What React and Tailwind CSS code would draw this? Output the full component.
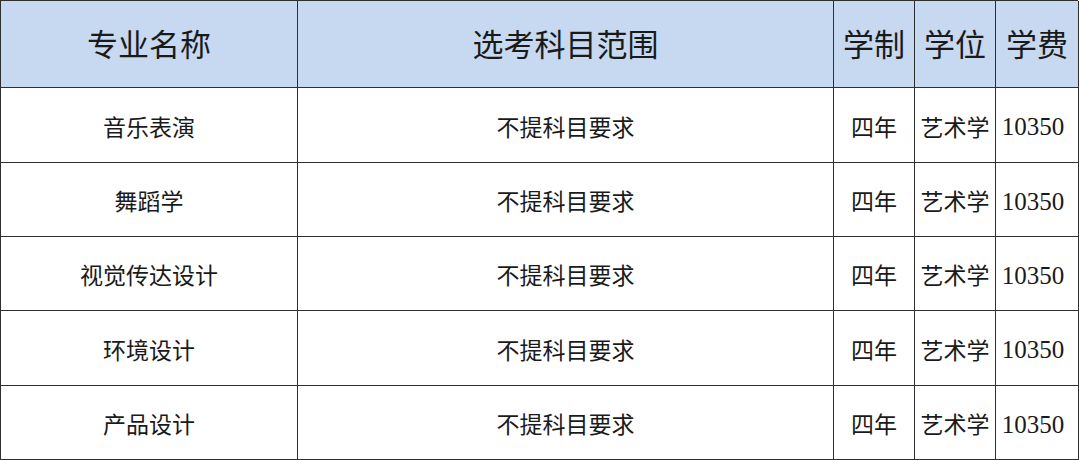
const rows = [
    { name: '音乐表演' },
    { name: '舞蹈学' },
    { name: '视觉传达设计' },
    { name: '环境设计' },
    { name: '产品设计' },
];

const font = { fontFamily: '"Liberation Serif", "Noto Sans CJK SC", serif' };

export default function App() {
    return (
        <div className="w-[1080px] h-[460px] bg-white overflow-hidden" style={font}>
            <div className="w-[1078px] grid grid-cols-[297px_536px_81px_81px_83px] grid-rows-[87px_75px_74px_74px_75px_74px] border-t-[1.5px] border-l-[1.5px] border-[#2f2f2f] text-[#1a1a1a]">
                {['专业名称', '选考科目范围', '学制', '学位', '学费'].map((h) => (
                    <div
                        key={h}
                        className="flex items-center justify-center pt-1 bg-[#c6d9f0] border-r-[1.5px] border-b-[1.5px] border-[#2f2f2f] text-[31px] whitespace-nowrap"
                    >
                        {h}
                    </div>
                ))}
                {rows.map((r) => (
                    <div key={r.name} className="contents">
                        <div className="flex items-center justify-center pt-2 border-r-[1.5px] border-b-[1.5px] border-[#2f2f2f] text-[23px]">
                            {r.name}
                        </div>
                        <div className="flex items-center justify-center pt-2 border-r-[1.5px] border-b-[1.5px] border-[#2f2f2f] text-[23px]">
                            不提科目要求
                        </div>
                        <div className="flex items-center justify-center pt-2 border-r-[1.5px] border-b-[1.5px] border-[#2f2f2f] text-[23px]">
                            四年
                        </div>
                        <div className="flex items-center justify-center pt-2 border-r-[1.5px] border-b-[1.5px] border-[#2f2f2f] text-[23px] whitespace-nowrap">
                            艺术学
                        </div>
                        <div className="flex items-center justify-center pt-1 pr-2 border-r-[1.5px] border-b-[1.5px] border-[#2f2f2f] text-[25px]">
                            10350
                        </div>
                    </div>
                ))}
            </div>
        </div>
    );
}
